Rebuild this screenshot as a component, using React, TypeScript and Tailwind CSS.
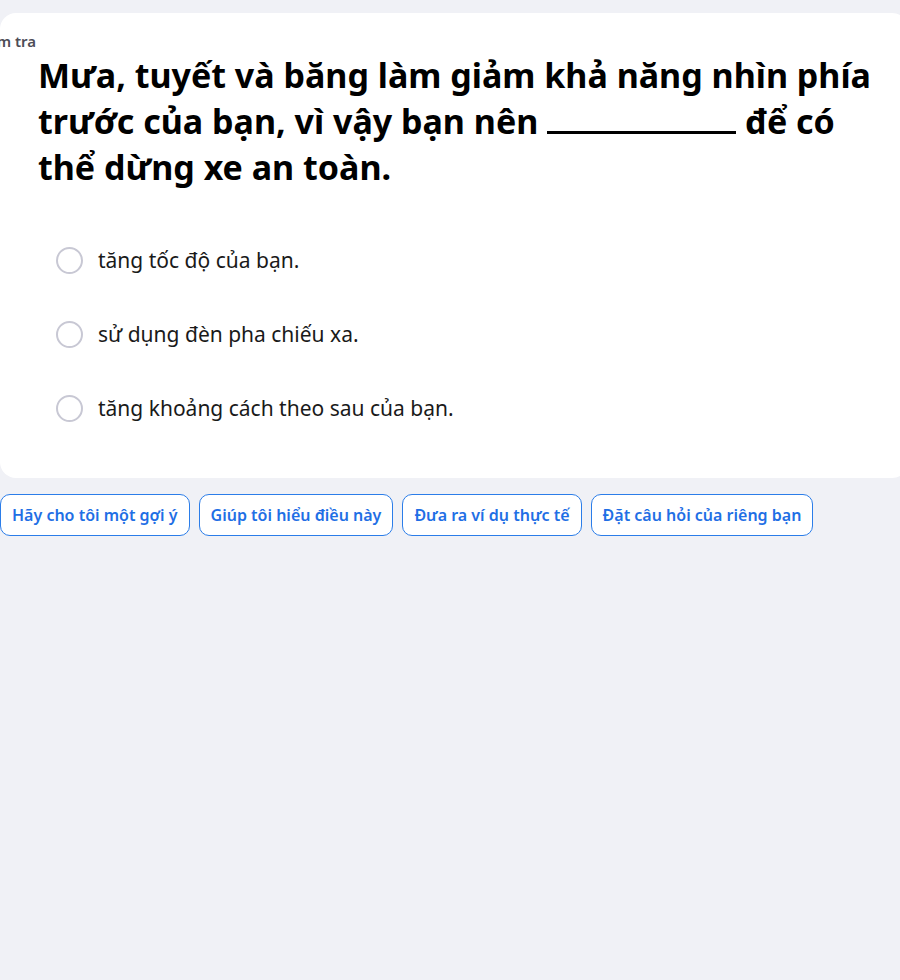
const options = [
  "tăng tốc độ của bạn.",
  "sử dụng đèn pha chiếu xa.",
  "tăng khoảng cách theo sau của bạn.",
];

const helpers = [
  "Hãy cho tôi một gợi ý",
  "Giúp tôi hiểu điều này",
  "Đưa ra ví dụ thực tế",
  "Đặt câu hỏi của riêng bạn",
];

export default function App() {
  return (
    <div
      className="min-h-[980px] bg-[#f0f1f6] pt-[13px] overflow-hidden"
      style={{ fontFamily: '"Noto Sans", "Open Sans", sans-serif' }}
    >
      <div className="bg-white rounded-[16px] w-[908px] pb-[56px]">
        <div className="pt-[18px] -ml-[26px] text-[15px] font-semibold leading-[20px] text-[#4d4d57]">
          Kiểm tra
        </div>
        <h1 className="pl-[38px] pr-[10px] mt-[1px] text-[34px] font-bold leading-[46px] text-black">
          Mưa, tuyết và băng làm giảm khả năng nhìn phía
          <br />
          trước của bạn, vì vậy bạn nên{" "}
          <span className="inline-block w-[189px] border-b-[3px] border-black align-baseline h-[1px]"></span>{" "}
          để có
          <br />
          thể dừng xe an toàn.
        </h1>

        <div className="mt-[56px] pl-[56px] flex flex-col gap-[46px]">
          {options.map((o) => (
            <label key={o} className="flex items-center gap-[15px] h-[28px]">
              <span className="w-[27px] h-[27px] rounded-full border-2 border-[#c8c8d4] bg-white shrink-0"></span>
              <span className="text-[21px] text-[#1a1a1a] leading-[28px]">{o}</span>
            </label>
          ))}
        </div>
      </div>

      <div className="mt-[16px] flex gap-[9px]">
        {helpers.map((h) => (
          <button
            key={h}
            className="h-[42px] px-[11px] rounded-[10px] border border-[#2b7de9] bg-white text-[16px] font-semibold text-[#1f6fe5]"
          >
            {h}
          </button>
        ))}
      </div>
    </div>
  );
}
